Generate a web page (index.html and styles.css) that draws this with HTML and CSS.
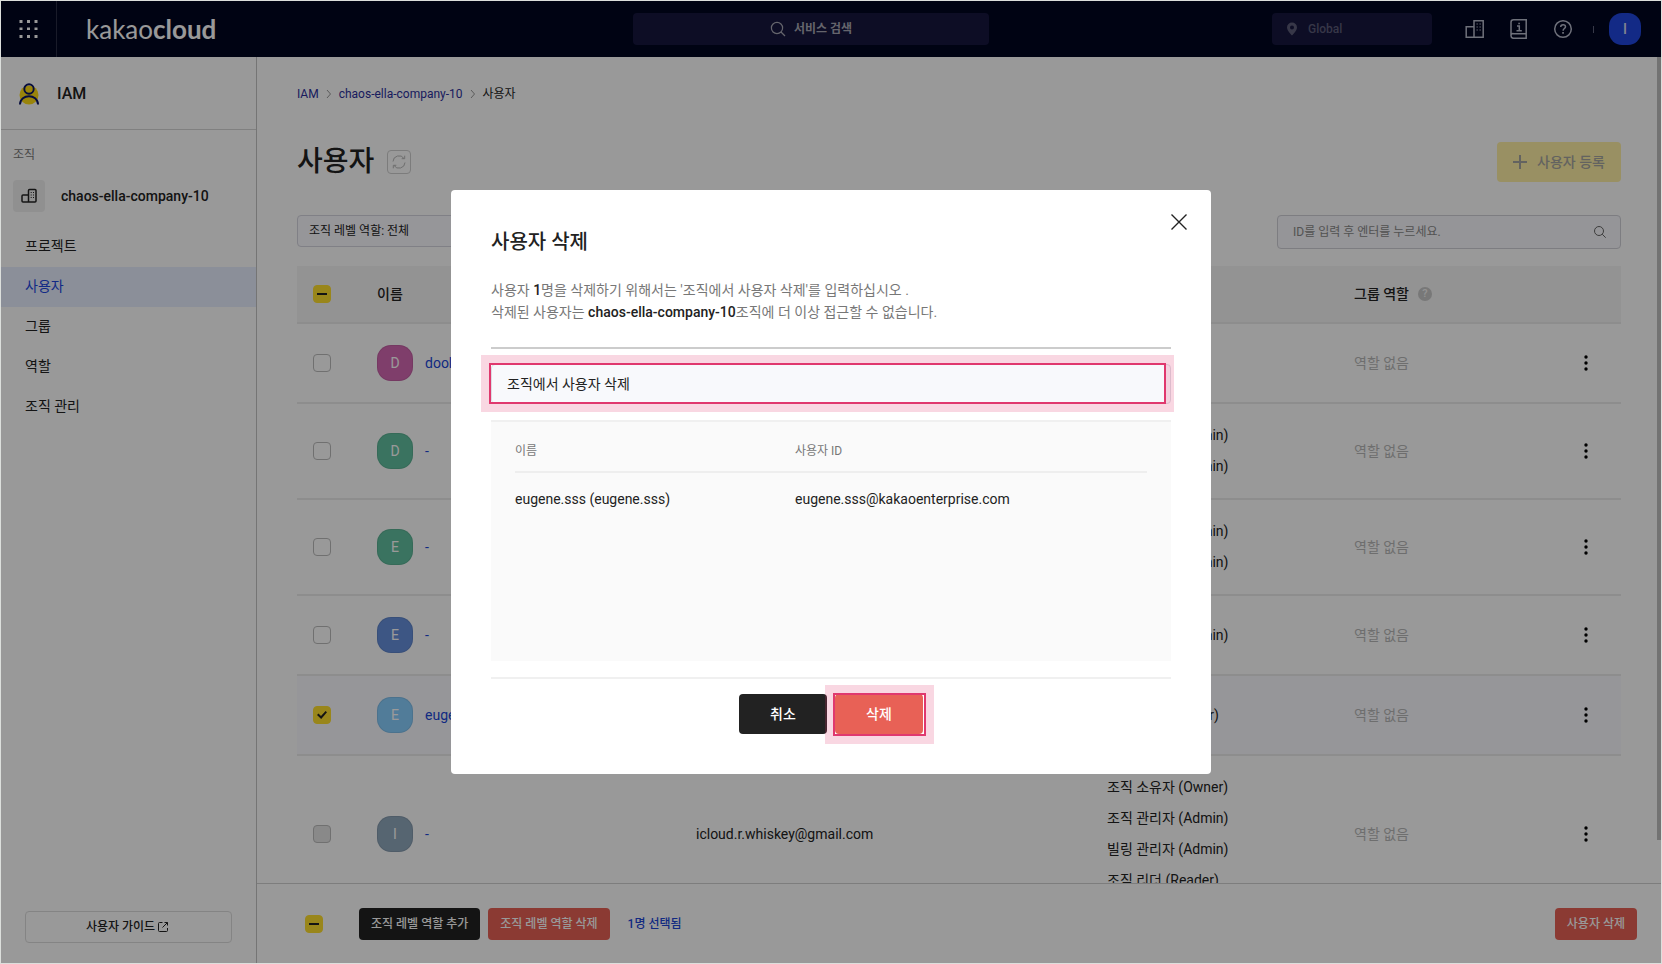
FILE: index.html
```html
<!DOCTYPE html>
<html lang="ko">
<head>
<meta charset="utf-8">
<title>IAM - 사용자</title>
<link rel="stylesheet" href="styles.css">
</head>
<body>
<div class="app">
  <header class="topbar">
    <div class="brand">
      <button class="apps" aria-label="메뉴">
        <svg width="20" height="20" viewBox="0 0 20 20" fill="#fff"><path d="M.5 1h3v3h-3zM8 1h3v3H8zM15.500 1h3v3h-3zM.5 8.500h3v2.500h-3zM8 8.500h3V11H8zM15.500 8.500h3V11h-3zM.5 16h3v3h-3zM8 16h3v3H8zM15.500 16h3v3h-3z"/></svg>
      </button>
      <a class="logo" href="#">kakao<b>cloud</b></a>
    </div>
    <button class="service-search">
      <svg width="16" height="16" viewBox="0 0 16 16" fill="none" stroke="currentColor" stroke-width="1.2"><circle cx="7" cy="7" r="5.6"/><path d="M11 11l4 4"/></svg>
      서비스 검색
    </button>
    <div class="tools">
      <button class="region">
        <svg width="12" height="14" viewBox="0 0 12 14" fill="currentColor"><path fill-rule="evenodd" d="M6 .5a5 5 0 0 1 5 5c0 3.400-5 8-5 8s-5-4.600-5-8a5 5 0 0 1 5-5zm0 3a2 2 0 1 0 0 4 2 2 0 0 0 0-4z"/></svg>
        Global
      </button>
      <button class="tool" aria-label="조직"><svg width="20" height="20" viewBox="0 0 20 20" fill="none" stroke="currentColor" stroke-width="1.5"><path d="M9 18.200V1.700h9.200v16.500H1.200V7.800H9"/><path d="M11.500 5h1.300M14.500 5h1.300M11.500 8h1.300M14.500 8h1.300M11.500 11h1.300M14.500 11h1.300" stroke-width="1.200"/></svg></button>
      <button class="tool" aria-label="문서"><svg width="20" height="20" viewBox="0 0 20 20" fill="none" stroke="currentColor" stroke-width="1.500"><path d="M18 .8H4.500a2.500 2.500 0 0 0-2.500 2.500v13.500a2.500 2.500 0 0 0 2.500 2.500H17.200V.8M2 17a2 2 0 0 1 2.500-2.300h12.700M8 7h2.300v4.600M7.500 11.700h5.300"/><path d="M9.300 3.700h1.600v1.600H9.300z" fill="currentColor" stroke="none"/></svg></button>
      <button class="tool" aria-label="도움말"><svg width="20" height="20" viewBox="0 0 20 20" fill="none" stroke="currentColor" stroke-width="1.500"><circle cx="10" cy="10" r="8.300"/><path d="M7.700 8c0-3 4.800-3 4.800-.3 0 1.800-2.400 1.800-2.400 4"/><path d="M9.200 13h1.700v1.700H9.200z" fill="currentColor" stroke="none"/></svg></button>
      <span class="bar"></span>
      <button class="me">I</button>
    </div>
  </header>

  <div class="body">
    <aside class="sidebar">
      <div class="product">
        <svg width="22" height="22" viewBox="0 0 22 22" fill="none" stroke="#0a1466" stroke-width="1.900"><circle cx="11" cy="12" r="9.500" fill="#ffdc14" stroke="none"/><circle cx="11" cy="6" r="4.700"/><path d="M1.900 21.500C2.500 10.500 19.500 10.500 20.100 21.500"/></svg>
        IAM
      </div>
      <p class="side-label">조직</p>
      <div class="org">
        <span class="org-icon"><svg width="16" height="16" viewBox="0 0 16 16" fill="none" stroke="#222" stroke-width="1.500"><path d="M7.500 14V2.500q0-1 1-1H14q1 0 1 1V13q0 1-1 1H2q-1 0-1-1V8q0-1 1-1h5.500"/><path d="M9.700 4.500h1M12 4.500h1M9.700 7h1M12 7h1M9.700 9.500h1M12 9.500h1" stroke-width="1.200"/></svg></span>
        chaos-ella-company-10
      </div>
      <nav class="menu">
        <a href="#">프로젝트</a>
        <a href="#" class="active">사용자</a>
        <a href="#">그룹</a>
        <a href="#">역할</a>
        <a href="#">조직 관리</a>
      </nav>
      <a class="guide" href="#">사용자 가이드
        <svg width="10" height="10" viewBox="0 0 10 10" fill="none" stroke="currentColor"><path d="M4.500.5H1.500q-1 0-1 1v7q0 1 1 1h7q1 0 1-1V6M6.500.5h3v3M9.500.5l-5 5"/></svg>
      </a>
    </aside>

    <main class="main">
      <div class="content">
        <nav class="crumbs">
          <a href="#">IAM</a>
          <svg width="6" height="10" viewBox="0 0 6 10" fill="none" stroke="#999"><path d="M1 1l3.500 4L1 9"/></svg>
          <a href="#">chaos-ella-company-10</a>
          <svg width="6" height="10" viewBox="0 0 6 10" fill="none" stroke="#999"><path d="M1 1l3.500 4L1 9"/></svg>
          <span>사용자</span>
        </nav>
        <div class="title-row">
          <h1>사용자</h1>
          <button class="refresh" aria-label="새로고침"><svg width="16" height="16" viewBox="0 0 16 16" fill="none" stroke="#b8b8b8"><path d="M2 7.500a6 6 0 0 1 11-3M14 8.500a6 6 0 0 1-11 3M13.700 1.700v3h-3M2.300 14.300v-3h3"/></svg></button>
          <button class="register"><svg width="14" height="14" viewBox="0 0 14 14" stroke="currentColor" stroke-width="2"><path d="M7 0v14M0 7h14"/></svg>사용자 등록</button>
        </div>
        <div class="filters">
          <select class="role-filter" aria-label="조직 레벨 역할"><option>조직 레벨 역할: 전체</option></select>
          <label class="search">
            <input type="text" placeholder="ID를 입력 후 엔터를 누르세요." aria-label="ID 검색">
            <svg width="12" height="12" viewBox="0 0 12 12" fill="none" stroke="#666"><circle cx="5" cy="5" r="4.500"/><path d="M8.200 8.200l3.500 3.500"/></svg>
          </label>
        </div>
        <table class="users">
          <colgroup><col class="c-check"><col class="c-name"><col><col class="c-role"><col class="c-group"><col class="c-more"></colgroup>
          <thead>
            <tr>
              <th><input type="checkbox" class="check partial" aria-label="모두 선택"></th>
              <th>이름</th><th aria-label="사용자 ID"></th><th aria-label="조직 레벨 역할"></th>
              <th><span class="with-help">그룹 역할 <i class="help">?</i></span></th><th></th>
            </tr>
          </thead>
          <tbody>
            <tr>
              <td><input type="checkbox" class="check" aria-label="dool 선택"></td>
              <td><div class="who"><span class="avatar pink">D</span><a href="#">dool</a></div></td>
              <td></td><td></td><td class="none">역할 없음</td>
              <td><button class="more" aria-label="더보기"><svg width="4" height="16" viewBox="0 0 4 16"><circle cx="2" cy="2" r="1.700"/><circle cx="2" cy="8" r="1.700"/><circle cx="2" cy="14" r="1.700"/></svg></button></td>
            </tr>
            <tr>
              <td><input type="checkbox" class="check" aria-label="선택"></td>
              <td><div class="who"><span class="avatar green">D</span><a href="#">-</a></div></td>
              <td></td><td>조직 관리자 (Admin)<br>빌링 관리자 (Admin)</td><td class="none">역할 없음</td>
              <td><button class="more" aria-label="더보기"><svg width="4" height="16" viewBox="0 0 4 16"><circle cx="2" cy="2" r="1.700"/><circle cx="2" cy="8" r="1.700"/><circle cx="2" cy="14" r="1.700"/></svg></button></td>
            </tr>
            <tr>
              <td><input type="checkbox" class="check" aria-label="선택"></td>
              <td><div class="who"><span class="avatar green">E</span><a href="#">-</a></div></td>
              <td></td><td>조직 관리자 (Admin)<br>빌링 관리자 (Admin)</td><td class="none">역할 없음</td>
              <td><button class="more" aria-label="더보기"><svg width="4" height="16" viewBox="0 0 4 16"><circle cx="2" cy="2" r="1.700"/><circle cx="2" cy="8" r="1.700"/><circle cx="2" cy="14" r="1.700"/></svg></button></td>
            </tr>
            <tr>
              <td><input type="checkbox" class="check" aria-label="선택"></td>
              <td><div class="who"><span class="avatar blue">E</span><a href="#">-</a></div></td>
              <td></td><td>조직 관리자 (Admin)</td><td class="none">역할 없음</td>
              <td><button class="more" aria-label="더보기"><svg width="4" height="16" viewBox="0 0 4 16"><circle cx="2" cy="2" r="1.700"/><circle cx="2" cy="8" r="1.700"/><circle cx="2" cy="14" r="1.700"/></svg></button></td>
            </tr>
            <tr class="selected">
              <td><input type="checkbox" class="check" checked aria-label="eugene.sss 선택"></td>
              <td><div class="who"><span class="avatar sky">E</span><a href="#">eugene.sss</a></div></td>
              <td></td><td>조직 리더 (Reader)</td><td class="none">역할 없음</td>
              <td><button class="more" aria-label="더보기"><svg width="4" height="16" viewBox="0 0 4 16"><circle cx="2" cy="2" r="1.700"/><circle cx="2" cy="8" r="1.700"/><circle cx="2" cy="14" r="1.700"/></svg></button></td>
            </tr>
            <tr>
              <td><input type="checkbox" class="check" disabled aria-label="선택"></td>
              <td><div class="who"><span class="avatar slate">I</span><a href="#">-</a></div></td>
              <td>icloud.r.whiskey@gmail.com</td>
              <td>조직 소유자 (Owner)<br>조직 관리자 (Admin)<br>빌링 관리자 (Admin)<br>조직 리더 (Reader)</td><td class="none">역할 없음</td>
              <td><button class="more" aria-label="더보기"><svg width="4" height="16" viewBox="0 0 4 16"><circle cx="2" cy="2" r="1.700"/><circle cx="2" cy="8" r="1.700"/><circle cx="2" cy="14" r="1.700"/></svg></button></td>
            </tr>
          </tbody>
        </table>
      </div>
      <div class="actions">
        <input type="checkbox" class="check partial" aria-label="모두 선택">
        <button class="small dark">조직 레벨 역할 추가</button>
        <button class="small red">조직 레벨 역할 삭제</button>
        <span class="count">1명 선택됨</span>
        <button class="small red last">사용자 삭제</button>
      </div>
      <span class="scroll-thumb"></span>
    </main>
  </div>

  <div class="backdrop">
    <section class="modal" role="dialog" aria-labelledby="dialog-title">
      <button class="close" aria-label="닫기"><svg width="16" height="16" viewBox="0 0 16 16" stroke="#222" stroke-width="1.400"><path d="M.5.5l15 15M15.500.5l-15 15"/></svg></button>
      <h2 id="dialog-title">사용자 삭제</h2>
      <p class="desc">사용자 <b>1</b>명을 삭제하기 위해서는 '조직에서 사용자 삭제'를 입력하십시오 .<br>삭제된 사용자는 <b>chaos-ella-company-10</b>조직에 더 이상 접근할 수 없습니다.</p>
      <hr class="rule strong">
      <div class="field">
        <input type="text" value="조직에서 사용자 삭제" aria-label="확인 문구">
        <span class="mark mark-field"></span>
      </div>
      <div class="targets">
        <table>
          <thead><tr><th>이름</th><th>사용자 ID</th></tr></thead>
          <tbody><tr><td>eugene.sss (eugene.sss)</td><td>eugene.sss@kakaoenterprise.com</td></tr></tbody>
        </table>
      </div>
      <hr class="rule">
      <div class="buttons">
        <button class="big dark">취소</button>
        <div class="marked">
          <button class="big red">삭제</button>
          <span class="mark mark-button"></span>
        </div>
      </div>
    </section>
  </div>
</div>
</body>
</html>
```

FILE: styles.css
```css
* { box-sizing: border-box; }
body {
  margin: 0;
  border: 1px solid #dcdfdc;
  font: 14px/20px Roboto, "Noto Sans CJK KR", sans-serif;
  color: #222;
  background: #fff;
}
h1, h2, p, hr { margin: 0; }
button, input, select { font: inherit; color: inherit; }
button { border: 0; padding: 0; background: none; display: flex; align-items: center; justify-content: center; }
a { color: inherit; text-decoration: none; }
svg { flex: none; }

.app { position: relative; height: calc(100vh - 2px); display: flex; flex-direction: column; overflow: hidden; }

.topbar { height: 56px; flex: none; display: flex; align-items: center; background: #000521; color: #b8bccc; padding-right: 20px; }
.brand { width: 349px; height: 100%; display: flex; align-items: center; }
.apps { width: 56px; height: 56px; border-right: 1px solid #2b2d45; }
.logo { margin-left: 29px; font: 26px/32px Lato, sans-serif; color: #fff; }
.service-search { width: 356px; height: 32px; margin: 0 auto; gap: 8px; border-radius: 4px; background: #16163e; color: #a9a9b5; font-size: 12px; font-weight: 700; }
.tools { display: flex; align-items: center; }
.region { width: 160px; height: 32px; margin-right: 33px; padding-left: 14px; gap: 10px; justify-content: flex-start; border-radius: 4px; background: #16163e; color: #5c5c78; font-size: 12px; font-weight: 500; }
.tool { width: 20px; height: 20px; margin-right: 24px; }
.bar { width: 1px; height: 7px; margin: 0 15px 0 -4px; background: #5c5f78; }
.me { width: 32px; height: 32px; border-radius: 13px; background: #2047e0; color: #d8dcf0; font-weight: 500; }

.body { flex: 1; min-height: 0; display: flex; }
.sidebar { width: 256px; flex: none; display: flex; flex-direction: column; border-right: 1px solid #c4c4c4; }
.product { height: 73px; flex: none; display: flex; align-items: center; gap: 17px; padding: 1px 0 0 17px; border-bottom: 1px solid #d5d5d5; font-size: 16px; font-weight: 500; }
.side-label { padding: 15px 12px 0; font-size: 12px; color: #777; }
.org { display: flex; align-items: center; gap: 16px; margin: 15px 12px; font-weight: 500; }
.org-icon { width: 32px; height: 32px; display: flex; align-items: center; justify-content: center; border-radius: 4px; background: #f0f0f0; }
.menu a { display: block; padding: 9px 24px 11px; }
.menu .active { background: #e8eeff; color: #2047e0; }
.guide { height: 32px; margin: auto 24px 20px; padding-right: 3px; display: flex; align-items: center; justify-content: center; gap: 3px; border: 1px solid #ddd; border-radius: 4px; font-size: 12px; font-weight: 500; }

.main { position: relative; flex: 1; min-width: 0; display: flex; flex-direction: column; }
.content { flex: 1; min-height: 0; overflow: hidden; padding: 27px 40px 0; }
.crumbs { display: flex; align-items: center; gap: 7px; font-size: 12px; }
.crumbs a { color: #2b309c; }
.title-row { display: flex; align-items: center; height: 40px; margin-top: 38px; }
.title-row h1 { font-size: 28px; line-height: 40px; font-weight: 500; }
.refresh { width: 24px; height: 24px; margin-left: 13px; border: 1px solid #cfcfcf; border-radius: 4px; }
.register { height: 40px; margin-left: auto; padding: 0 16px; gap: 10px; border-radius: 4px; background: #fff0a5; color: #a5a5a0; font-weight: 500; }
.filters { display: flex; justify-content: space-between; align-items: flex-start; margin-top: 33px; }
.role-filter { width: 200px; height: 32px; appearance: none; padding: 0 11px; border: 1px solid #d5d5e0; border-radius: 4px; background: #fafaff; font-size: 12px; }
.search { width: 344px; height: 34px; display: flex; align-items: center; padding: 0 14px 0 15px; border: 1px solid #d0d0d8; border-radius: 4px; background: #f8f8fd; }
.search input { flex: 1; min-width: 0; border: 0; padding: 0; background: none; outline: 0; font-size: 12px; }
.search input::placeholder { color: #8a8a8a; }

.users { width: 100%; margin-top: 17px; table-layout: fixed; border-collapse: collapse; }
.users th, .users td { padding: 0 16px; text-align: left; border-bottom: 2px solid #ebebeb; }
.users th { height: 57px; background: #f5f5f5; font-weight: 500; }
.users td { height: 80px; padding: 16px; line-height: 31px; }
.users .selected { background: #fafaff; }
.users .none { color: #b8b8b8; }
.c-check { width: 64px; }
.c-name { width: 319px; }
.c-role { width: 247px; }
.c-group { width: 212px; }
.c-more { width: 71px; }
.who { display: flex; align-items: center; gap: 12px; }
.who a { color: #2047d8; }
.avatar { width: 36px; height: 36px; display: flex; align-items: center; justify-content: center; border-radius: 14px; border: 1px solid rgba(0, 0, 0, 0.08); color: #fff; line-height: 20px; }
.pink { background: #d468b2; }
.green { background: #62c0a0; }
.blue { background: #6790dc; }
.sky { background: #88cfff; }
.slate { background: #90a8bd; }
.more { width: 39px; height: 24px; }
.with-help { display: flex; align-items: center; gap: 9px; }
.help { width: 14px; height: 14px; border-radius: 50%; background: #c8c8c8; color: #f5f5f5; font: 500 11px/14px Roboto, sans-serif; text-align: center; }

.check { appearance: none; display: flex; align-items: center; justify-content: center; flex: none; width: 18px; height: 18px; margin: 0; border: 1px solid #bbb; border-radius: 4px; background: #fff; }
.check:disabled { background: #e4e4e4; }
.check:checked, .check.partial { border-color: #ffdf2e; background: #ffdf2e; }
.check.partial::after { content: ""; width: 10px; height: 2px; background: #222; }
.check:checked::after { content: ""; width: 10px; height: 8px; background: #222; clip-path: polygon(0 50%, 15% 32%, 40% 62%, 86% 0, 100% 16%, 42% 100%); }

.actions { height: 80px; flex: none; display: flex; align-items: center; gap: 8px; padding: 0 24px 0 48px; border-top: 1px solid #d0d0d0; }
.actions .check { margin-right: 28px; }
.small { height: 32px; padding: 0 12px; border-radius: 4px; font-size: 12px; font-weight: 500; color: #fff; }
.dark { background: #222; color: #fff; }
.red { background: #e86156; color: #fff; }
.count { margin-left: 10px; font-size: 12px; font-weight: 500; color: #2047d8; }
.last { margin-left: auto; }
.scroll-thumb { position: absolute; top: 0; right: 0; width: 4px; height: 783px; background: #c0c0c0; }

.backdrop { position: absolute; inset: 0; display: flex; align-items: center; justify-content: center; background: rgba(0, 0, 0, 0.4); }
.modal { position: relative; width: 760px; padding: 37px 40px 40px; border-radius: 4px; background: #fff; }
.close { position: absolute; top: 24px; right: 24px; width: 16px; height: 16px; }
.modal h2 { font-size: 20px; line-height: 30px; font-weight: 500; }
.desc { margin-top: 22px; line-height: 22px; color: #777; }
.desc b { font-weight: 500; color: #222; }
.rule { height: 2px; border: 0; background: #f0f0f0; }
.rule.strong { margin-top: 24px; background: #ccc; }
.field { position: relative; margin: 15px 0 16px; }
.field input { display: block; width: 100%; height: 40px; padding: 0 15px 2px; border: 1px solid #dcdce4; border-radius: 4px; background: #f8f9fc; outline: 0; }
.mark { position: absolute; border: 2px solid #e0386e; box-shadow: 0 0 0 8px rgba(224, 56, 110, 0.2); pointer-events: none; }
.mark-field { inset: -1px 5px 0 -2px; }
.mark-button { inset: -1px -3px -2px -2px; }
.targets { height: 241px; margin-bottom: 16px; padding: 0 24px; border-top: 2px solid #f0f0f0; background: #fafafa; }
.targets table { width: 100%; table-layout: fixed; border-collapse: collapse; }
.targets th { height: 50px; padding: 8px 0 0; border-bottom: 2px solid #eee; text-align: left; font-size: 12px; font-weight: 400; color: #777; }
.targets th:first-child { width: 280px; }
.targets td { height: 52px; padding: 0; }
.buttons { display: flex; justify-content: center; gap: 8px; margin-top: 15px; }
.marked { position: relative; }
.big { width: 88px; height: 40px; border-radius: 4px; font-weight: 500; }
```
